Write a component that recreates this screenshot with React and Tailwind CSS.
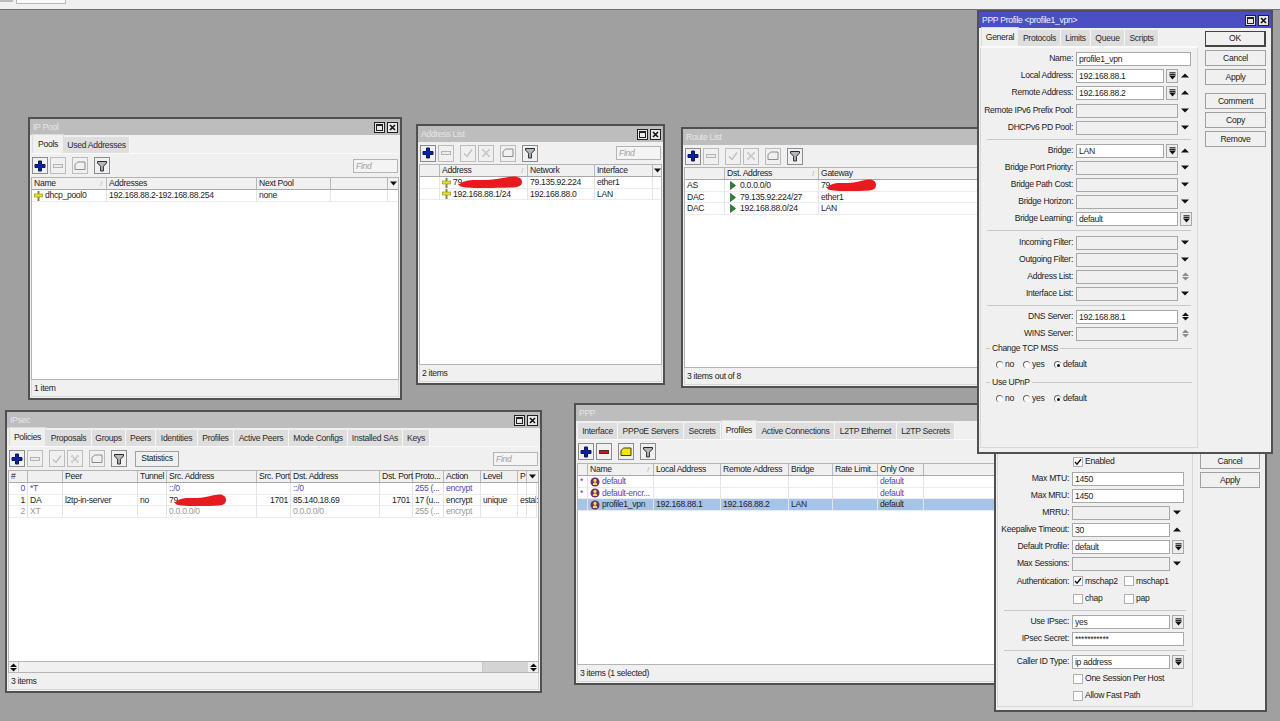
// App.jsx
const TOOL_ICONS = {
  add: <path d="M4.5 1h3v3.5H11v3H7.5V11h-3V7.5H1v-3h3.5z" fill="#0a1eb0" stroke="#0c1a50" />,
  remove: <rect x="1.5" y="4.5" width="9" height="3" fill="#ececec" stroke="#b4b4b4" />,
  removeOn: <rect x="1.5" y="4.5" width="9" height="3" fill="#c8161e" stroke="#5a2a2a" />,
  check: <path d="M2 6.5l3 3 5-7" fill="none" stroke="#c0c0c0" strokeWidth="1.4" />,
  x: <path d="M2.5 2.5l7 7M9.5 2.5l-7 7" fill="none" stroke="#c0c0c0" strokeWidth="2" strokeDasharray="1.4 .7" />,
  note: <path d="M1 9.5V4.5L3.8 2H11v7.5z" fill="#f0f0f0" stroke="#8c8c8c" />,
  noteOn: <path d="M1 9.5V4.5L3.8 2H11v7.5z" fill="#f6e800" stroke="#3a3a20" />,
  filter: <path d="M1.5 1.5h9V3L7.4 6.3V11H4.6V6.3L1.5 3z" fill="#b4b8bc" stroke="#26282c" />,
};

function ToolBtn({ icon }) {
  const dim = icon === "remove" || icon === "check" || icon === "x" || icon === "note";
  return (
    <div className={`w-[16px] h-[17px] flex items-center justify-center border ${dim ? "border-[#bcbcbc]" : "border-[#8c8c8c]"}`}>
      <svg width="12" height="12" viewBox="0 0 12 12">{TOOL_ICONS[icon]}</svg>
    </div>
  );
}

function Toolbar({ items, children, className }) {
  return (
    <div className={`shrink-0 flex items-center gap-[2px] pl-[1px] pr-[1px] ${className || "h-[23px]"}`}>
      {items.map((it, i) => (it === "|" ? <div key={i} className="w-[2px]" /> : <ToolBtn key={i} icon={it} />))}
      {children}
      <div className="ml-auto w-[45px] h-[14px] border border-[#b4b4b4] bg-[#f4f4f4] px-[2px] text-[#a0a0a0] italic leading-[12px]">Find</div>
    </div>
  );
}

function TitleBtns() {
  return (
    <div className="ml-auto flex gap-[2px] pr-[2px]">
      <div className="w-[11px] h-[11px] border border-[#222] bg-[#e8e8e8] flex items-center justify-center">
        <div className="w-[7px] h-[7px] border border-[#222] border-t-2" />
      </div>
      <div className="w-[11px] h-[11px] border border-[#222] bg-[#e8e8e8] flex items-center justify-center">
        <svg width="7" height="7" viewBox="0 0 7 7"><path d="M1 1l5 5M6 1L1 6" stroke="#111" strokeWidth="1.6" /></svg>
      </div>
    </div>
  );
}

function Win({ title, active, pos, children }) {
  return (
    <div className={`absolute ${pos} flex flex-col bg-[#f0f0f0] border-2 border-[#505050]`}>
      <div className={`h-[16px] shrink-0 flex items-center pl-[3px] ${active ? "bg-[#4a50c4] text-[#f0f0ff]" : "bg-[#bdbdbd] text-[#e6e6e6]"}`}>
        <span>{title}</span>
        <TitleBtns />
      </div>
      {children}
    </div>
  );
}

function Tabs({ tabs, activeIdx }) {
  return (
    <div className="flex items-end shrink-0 h-[19px] pl-[1px] border-b border-[#fafafa]">
      {tabs.map(([label, w], i) => (
        <div
          key={label}
          style={{ width: w }}
          className={
            i === activeIdx
              ? "h-[19px] flex items-center justify-center bg-[#f0f0f0] border-x border-t border-[#dcdcdc] text-[#222]"
              : "h-[16px] flex items-center justify-center bg-[#dedede] border-r border-[#f6f6f6] text-[#2a2a2a]"
          }
        >
          {label}
        </div>
      ))}
    </div>
  );
}

// red marker stroke that hides part of an address
function Redact({ w }) {
  return (
    <svg width={w} height="12" viewBox="0 0 70 12" preserveAspectRatio="none" className="absolute left-[7px] top-[-1px] overflow-visible">
      <path d="M1 7C8 3 20 4 30 4S50 1 60 .5c6-.3 10 2 10 5.5s-4 5-10 5.5C45 12 20 12.5 8 11.5S-1 9 1 7z" fill="#e81a1e" />
    </svg>
  );
}

function Masked({ w }) {
  return (
    <span className="relative">
      79
      <Redact w={w} />
    </span>
  );
}

function PoolIcon() {
  return (
    <svg width="9" height="10" viewBox="0 0 9 10" className="shrink-0 mr-[2px]">
      <path d="M4.5 0v10" stroke="#7c8c50" strokeWidth="2" />
      <rect x=".3" y="3" width="8.4" height="3" fill="#e8e020" stroke="#8c8c30" strokeWidth=".6" />
    </svg>
  );
}

function RouteIcon() {
  return (
    <svg width="6" height="9" viewBox="0 0 6 9" className="shrink-0 mr-[4px] ml-[3px]">
      <path d="M.5.5L5.5 4.5.5 8.5z" fill="#1e8a2a" stroke="#243a24" strokeWidth=".6" />
    </svg>
  );
}

function ProfileIcon() {
  return (
    <svg width="10" height="10" viewBox="0 0 10 10" className="shrink-0 mr-[2px]">
      <circle cx="5" cy="5" r="4.5" fill="#6e2a78" />
      <circle cx="5" cy="3.4" r="1.6" fill="#f0e040" />
      <path d="M2.8 8c0-2 .8-2.8 2.2-2.8S7.2 6 7.2 8z" fill="#f0e040" />
    </svg>
  );
}

function SortMark() {
  return <span className="ml-auto pr-[2px] text-[#a8a8a8] text-[7px]">/</span>;
}

function MenuArrow() {
  return (
    <svg width="7" height="5" viewBox="0 0 7 5"><path d="M0 .5h7L3.5 4.5z" fill="#111" /></svg>
  );
}

function Cell({ icon, children, right }) {
  return (
    <div className={`relative flex items-center h-full px-[2px] border-r border-[#e4e4e4] whitespace-nowrap ${right ? "justify-end" : ""}`}>
      {icon}
      {children}
    </div>
  );
}

function Table({ cols, head, rows, menu = true }) {
  return (
    <div className="flex-1 min-h-0 overflow-hidden bg-white border border-[#b4b4b4]">
      <div className={`grid ${cols} h-[12px] bg-[#f0f0f0] border-b border-[#a8a8a8] text-[#222]`}>
        {head.map((h, i) => (
          <div key={i} className="flex items-center px-[2px] border-r border-[#b8b8b8] whitespace-nowrap">
            {h === "/" ? null : h.replace("^", "")}
            {h.endsWith("^") && <SortMark />}
          </div>
        ))}
        {menu && (
          <div className="flex items-center justify-center">
            <MenuArrow />
          </div>
        )}
      </div>
      {rows.map((r, i) => (
        <div
          key={i}
          className={`grid ${cols} h-[11.5px] border-b border-[#ececec] ${r.tone === "dyn" ? "text-[#4f45c8]" : r.tone === "off" ? "text-[#9a9a9a]" : "text-[#1e1e1e]"} ${r.selected ? "bg-[#a6c4e8]" : ""}`}
        >
          {r.cells.map((c, j) => (
            <Cell key={j} icon={r.icons?.[j]} right={r.right?.includes(j)}>
              {c}
            </Cell>
          ))}
        </div>
      ))}
    </div>
  );
}

function Status({ children }) {
  return <div className="h-[17px] shrink-0 flex items-center px-[2px] border-x border-b border-[#d8d8d8] text-[#222]">{children}</div>;
}

function Arrow({ kind }) {
  const fill = kind === "bothDim" ? "#8c8c8c" : "#111";
  const both = kind === "both" || kind === "bothDim";
  return (
    <div className="w-[14px] shrink-0 flex items-center justify-center">
      {both ? (
        <svg width="7" height="9" viewBox="0 0 7 9">
          <path d="M0 4h7L3.5 .5z" fill={fill} />
          <path d="M0 5h7L3.5 8.5z" fill={fill} />
        </svg>
      ) : (
        <svg width="8" height="5" viewBox="0 0 8 5">
          <path d={kind === "up" ? "M0 4.5h8L4 .5z" : "M0 .5h8L4 4.5z"} fill={fill} />
        </svg>
      )}
    </div>
  );
}

function PickBtn() {
  return (
    <div className="w-[12px] h-[14px] ml-[2px] shrink-0 flex items-center justify-center border border-[#a8a8a8] bg-[#ececec]">
      <svg width="7" height="8" viewBox="0 0 7 8">
        <path d="M.5 .8h6M.5 2.4h6" stroke="#111" />
        <path d="M0 3.5h7L3.5 7.5z" fill="#111" />
      </svg>
    </div>
  );
}

function Field({ label, value, w, btn, arrow, off, labelW, className }) {
  return (
    <div className={`h-[17px] flex items-center shrink-0 ${className || ""}`}>
      <div className={`${labelW} text-right pr-[3px] whitespace-nowrap text-[#222]`}>{label}</div>
      <div className={`${w} h-[14px] border border-[#a8a8a8] px-[2px] leading-[12px] text-[#1e1e1e] ${off ? "bg-[#f0f0f0]" : "bg-white"}`}>{value}</div>
      {btn && <PickBtn />}
      {arrow && <Arrow kind={arrow} />}
    </div>
  );
}

function Sep({ h }) {
  return <div className={`${h || "h-[6px]"} flex items-center shrink-0 px-[6px]`}><div className="h-px w-full bg-[#c8c8c8]" /></div>;
}

function Radio({ label, on, w }) {
  return (
    <div className={`flex items-center gap-[2px] ${w || ""}`}>
      <div className="w-[7px] h-[7px] rounded-full border-l border-t border-[#666] bg-white flex items-center justify-center">
        {on && <div className="w-[3px] h-[3px] rounded-full bg-[#111]" />}
      </div>
      <span>{label}</span>
    </div>
  );
}

function RadioGroup({ title }) {
  return (
    <div className="shrink-0 h-[34px]">
      <div className="flex items-center h-[13px] pl-[5px] pr-[5px]">
        <div className="w-[4px] h-px bg-[#c8c8c8]" />
        <span className="px-[2px] text-[#222]">{title}</span>
        <div className="flex-1 h-px bg-[#c8c8c8]" />
      </div>
      <div className="flex items-center h-[19px] pl-[15px] text-[#222]">
        <Radio label="no" w="w-[27px]" />
        <Radio label="yes" w="w-[31px]" />
        <Radio label="default" on />
      </div>
    </div>
  );
}

function Btn({ children, main, className }) {
  return (
    <div className={`h-[16px] shrink-0 flex items-center justify-center border ${main ? "border-[#444] border-b-2 border-r-2" : "border-[#a0a0a0]"} text-[#222] ${className || ""}`}>
      {children}
    </div>
  );
}

function Check({ label, on, w }) {
  return (
    <div className={`flex items-center gap-[2px] ${w || ""}`}>
      <div className="w-[10px] h-[10px] border border-[#b0b0b0] bg-white flex items-center justify-center">
        {on && <svg width="8" height="8" viewBox="0 0 8 8"><path d="M1 4l2 2.2L7 1.2" fill="none" stroke="#111" strokeWidth="1.4" /></svg>}
      </div>
      <span>{label}</span>
    </div>
  );
}

function ProfileForm() {
  const f = { labelW: "w-[95px]" };
  return (
    <div className="flex-1 flex flex-col pt-[2px] border border-[#d8d8d8] border-t-[#fafafa]">
      <Field {...f} label="Name:" value="profile1_vpn" w="w-[115px]" />
      <Field {...f} label="Local Address:" value="192.168.88.1" w="w-[88px]" btn arrow="up" />
      <Field {...f} label="Remote Address:" value="192.168.88.2" w="w-[88px]" btn arrow="up" />
      <Field {...f} label="Remote IPv6 Prefix Pool:" off w="w-[102px]" arrow="down" className="mt-[1px]" />
      <Field {...f} label="DHCPv6 PD Pool:" off w="w-[102px]" arrow="down" />
      <Sep />
      <Field {...f} label="Bridge:" value="LAN" w="w-[88px]" btn arrow="up" />
      <Field {...f} label="Bridge Port Priority:" off w="w-[102px]" arrow="down" />
      <Field {...f} label="Bridge Path Cost:" off w="w-[102px]" arrow="down" />
      <Field {...f} label="Bridge Horizon:" off w="w-[102px]" arrow="down" />
      <Field {...f} label="Bridge Learning:" value="default" w="w-[102px]" btn />
      <Sep h="h-[7px]" />
      <Field {...f} label="Incoming Filter:" off w="w-[102px]" arrow="down" />
      <Field {...f} label="Outgoing Filter:" off w="w-[102px]" arrow="down" />
      <Field {...f} label="Address List:" off w="w-[102px]" arrow="bothDim" />
      <Field {...f} label="Interface List:" off w="w-[102px]" arrow="down" />
      <Sep />
      <Field {...f} label="DNS Server:" value="192.168.88.1" w="w-[102px]" arrow="both" />
      <Field {...f} label="WINS Server:" off w="w-[102px]" arrow="bothDim" />
      <RadioGroup title="Change TCP MSS" />
      <RadioGroup title="Use UPnP" />
    </div>
  );
}

function ServerForm() {
  const f = { labelW: "w-[74px]" };
  const cbRow = "h-[17px] flex items-center pl-[75px] shrink-0";
  return (
    <div className="flex-1 flex flex-col justify-end pb-[2px] border border-[#d8d8d8]">
      <div className={cbRow}><Check label="Enabled" on /></div>
      <Field {...f} label="Max MTU:" value="1450" w="w-[112px]" />
      <Field {...f} label="Max MRU:" value="1450" w="w-[112px]" />
      <Field {...f} label="MRRU:" off w="w-[98px]" arrow="down" />
      <Field {...f} label="Keepalive Timeout:" value="30" w="w-[98px]" arrow="up" />
      <Field {...f} label="Default Profile:" value="default" w="w-[98px]" btn />
      <Field {...f} label="Max Sessions:" off w="w-[98px]" arrow="down" />
      <div className="h-[18px] flex items-center shrink-0">
        <div className="w-[74px] text-right pr-[3px] whitespace-nowrap">Authentication:</div>
        <div className="pl-[1px]"><Check label="mschap2" on w="w-[51px]" /></div>
        <Check label="mschap1" />
      </div>
      <div className={cbRow}>
        <Check label="chap" w="w-[51px]" />
        <Check label="pap" />
      </div>
      <Sep />
      <Field {...f} label="Use IPsec:" value="yes" w="w-[98px]" btn />
      <Field {...f} label="IPsec Secret:" value="***********" w="w-[112px]" />
      <Sep />
      <Field {...f} label="Caller ID Type:" value="ip address" w="w-[98px]" btn />
      <div className={cbRow}><Check label="One Session Per Host" /></div>
      <div className={cbRow}><Check label="Allow Fast Path" /></div>
    </div>
  );
}

export default function App() {
  return (
    <div className="relative w-[1280px] h-[721px] overflow-hidden bg-[#a0a0a0] font-['Liberation_Sans',Arial,sans-serif] text-[8.6px] tracking-[-0.3px] leading-[11px] text-[#222]">
      {/* clipped host page strip */}
      <div className="h-[10px] bg-[#f0f0f0] border-b border-[#707070] flex items-start">
        <span className="w-[13px] h-[2px] bg-[#9a9a9a] opacity-60" />
        <span className="w-[50px] h-[4px] ml-[3px] border-b border-x border-[#b8b8b8] bg-[#fafafa]" />
      </div>

      <Win title="IP Pool" pos="left-[28px] top-[117px] w-[374px] h-[283px]">
        <div className="flex-1 min-h-0 flex flex-col px-[1px] pb-[1px]">
          <Tabs tabs={[["Pools", 32], ["Used Addresses", 66]]} activeIdx={0} />
          <Toolbar items={["add", "remove", "|", "note", "|", "filter"]} />
          <Table
            cols="grid-cols-[75px_150px_74px_57px_11px]"
            head={["Name^", "Addresses", "Next Pool", "/"]}
            rows={[{ cells: ["dhcp_pool0", "192.168.88.2-192.168.88.254", "none", ""], icons: [<PoolIcon />] }]}
          />
          <Status>1 item</Status>
        </div>
      </Win>

      <Win title="Address List" pos="left-[416px] top-[124px] w-[249px] h-[261px]">
        <div className="flex-1 min-h-0 flex flex-col px-[1px] pb-[1px]">
          <Toolbar className="h-[22px]" items={["add", "remove", "|", "check", "x", "|", "note", "|", "filter"]} />
          <Table
            cols="grid-cols-[20px_88px_67px_58px_9px]"
            head={["/", "Address^", "Network", "Interface"]}
            rows={[
              { cells: ["", <Masked w={62} />, "79.135.92.224", "ether1"], icons: [null, <PoolIcon />] },
              { cells: ["", "192.168.88.1/24", "192.168.88.0", "LAN"], icons: [null, <PoolIcon />] },
            ]}
          />
          <Status>2 items</Status>
        </div>
      </Win>

      <Win title="Route List" pos="left-[681px] top-[127px] w-[370px] h-[261px]">
        <div className="flex-1 min-h-0 flex flex-col px-[1px] pb-[1px]">
          <Toolbar className="h-[22px]" items={["add", "remove", "|", "check", "x", "|", "note", "|", "filter"]} />
          <Table
            cols="grid-cols-[40px_94px_1fr]"
            menu={false}
            head={["/", "Dst. Address^", "Gateway"]}
            rows={[
              { cells: ["AS", "0.0.0.0/0", <Masked w={48} />], icons: [null, <RouteIcon />] },
              { cells: ["DAC", "79.135.92.224/27", "ether1"], icons: [null, <RouteIcon />] },
              { cells: ["DAC", "192.168.88.0/24", "LAN"], icons: [null, <RouteIcon />] },
            ]}
          />
          <Status>3 items out of 8</Status>
        </div>
      </Win>

      <Win title="IPsec" pos="left-[5px] top-[410px] w-[537px] h-[283px]">
        <div className="flex-1 min-h-0 flex flex-col px-[1px] pb-[1px]">
          <Tabs
            tabs={[["Policies", 37], ["Proposals", 46], ["Groups", 34], ["Peers", 30], ["Identities", 42], ["Profiles", 36], ["Active Peers", 55], ["Mode Configs", 59], ["Installed SAs", 55], ["Keys", 27]]}
            activeIdx={0}
          />
          <Toolbar items={["add", "remove", "|", "check", "x", "|", "note", "|", "filter"]}>
            <Btn className="w-[44px] ml-[6px]">Statistics</Btn>
          </Toolbar>
          <div className="flex-1 min-h-0 flex flex-col">
            <Table
              cols="grid-cols-[19px_35px_75px_29px_90px_34px_89px_33px_31px_37px_37px_9px_10px]"
              head={["#", "/", "Peer", "Tunnel", "Src. Address", "Src. Port", "Dst. Address", "Dst. Port", "Proto...", "Action", "Level", "P"]}
              rows={[
                { tone: "dyn", right: [0], cells: ["0", "*T", "", "", "::/0", "", "::/0", "", "255 (...", "encrypt", "", "", ""] },
                { right: [0, 5, 7], cells: ["1", "DA", "l2tp-in-server", "no", <Masked w={50} />, "1701", "85.140.18.69", "1701", "17 (u...", "encrypt", "unique", "estab", ""] },
                { tone: "off", right: [0], cells: ["2", "XT", "", "", "0.0.0.0/0", "", "0.0.0.0/0", "", "255 (...", "encrypt", "", "", ""] },
              ]}
            />
            <div className="h-[11px] shrink-0 flex items-center border-x border-b border-[#b4b4b4] bg-[#f0f0f0]">
              <div className="w-[9px] flex justify-center"><Arrow kind="both" /></div>
              <div className="flex-1 h-full border-x border-[#c8c8c8]" />
              <div className="w-[45px] h-full bg-[#d4d4d4]" />
              <div className="w-[10px] flex justify-center"><Arrow kind="both" /></div>
            </div>
          </div>
          <Status>3 items</Status>
        </div>
      </Win>

      <Win title="PPP" pos="left-[574px] top-[403px] w-[470px] h-[282px]">
        <div className="flex-1 min-h-0 flex flex-col px-[1px] pb-[1px]">
          <Tabs
            tabs={[["Interface", 40], ["PPPoE Servers", 66], ["Secrets", 37], ["Profiles", 36], ["Active Connections", 78], ["L2TP Ethernet", 62], ["L2TP Secrets", 58]]}
            activeIdx={3}
          />
          <Toolbar items={["add", "removeOn", "|", "noteOn", "|", "filter"]} />
          <Table
            cols="grid-cols-[10px_66px_67px_68px_44px_45px_46px_1fr]"
            menu={false}
            head={["/", "Name^", "Local Address", "Remote Address", "Bridge", "Rate Limit...", "Only One", "/"]}
            rows={[
              { tone: "dyn", cells: ["*", "default", "", "", "", "", "default", ""], icons: [null, <ProfileIcon />] },
              { tone: "dyn", cells: ["*", "default-encr...", "", "", "", "", "default", ""], icons: [null, <ProfileIcon />] },
              { selected: true, cells: ["", "profile1_vpn", "192.168.88.1", "192.168.88.2", "LAN", "", "default", ""], icons: [null, <ProfileIcon />] },
            ]}
          />
          <Status>3 items (1 selected)</Status>
        </div>
      </Win>

      <Win title="L2TP Server" pos="left-[994px] top-[410px] w-[273px] h-[302px]">
        <div className="flex-1 min-h-0 flex pl-[1px] pr-[5px] pb-[3px]">
          <div className="w-[196px] flex flex-col"><ServerForm /></div>
          <div className="flex-1 pl-[7px] flex flex-col gap-[3px] pt-[6px]">
            <Btn>OK</Btn>
            <Btn>Cancel</Btn>
            <Btn>Apply</Btn>
          </div>
        </div>
      </Win>

      <Win active title="PPP Profile <profile1_vpn>" pos="left-[977px] top-[10px] w-[296px] h-[444px]">
        <div className="flex-1 min-h-0 flex pl-[1px] pr-[5px] pb-[4px]">
          <div className="w-[218px] flex flex-col">
            <Tabs tabs={[["General", 38], ["Protocols", 42], ["Limits", 30], ["Queue", 34], ["Scripts", 34]]} activeIdx={0} />
            <ProfileForm />
          </div>
          <div className="flex-1 pl-[7px] pt-[3px] flex flex-col gap-[3px]">
            <Btn main>OK</Btn>
            <Btn>Cancel</Btn>
            <Btn>Apply</Btn>
            <Btn className="mt-[5px]">Comment</Btn>
            <Btn>Copy</Btn>
            <Btn>Remove</Btn>
          </div>
        </div>
      </Win>
    </div>
  );
}
